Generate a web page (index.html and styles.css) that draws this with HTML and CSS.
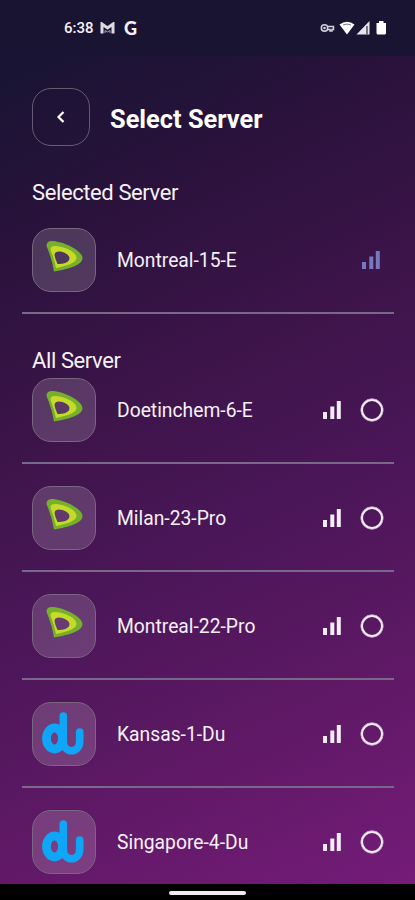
FILE: index.html
```html
<!DOCTYPE html>
<html lang="en">

<head>
    <meta charset="UTF-8">
    <meta name="viewport" content="width=device-width, initial-scale=1.0">
    <title>Select Server</title>
    <link rel="stylesheet" href="styles.css">
</head>

<body>
    <!-- shared icons -->
    <svg class="defs" width="0" height="0">
        <symbol id="etisalat" viewBox="0 0 64 64">
            <path fill-rule="evenodd" d="M14.500 18 Q14.500 12.500 21 13 C33 14 50.500 23 50.500 30 C50.500 37 37 41 22 43.500 Q20 31 14.500 18Z M22 27 V30 L26 37 C31 36 38 35 38 30 C38 24 23 19 22 27Z" fill="#76b02c"/>
            <path fill-rule="evenodd" d="M18.500 22 Q18 17.500 24 18 C34 19 44.500 24 44.500 30 C44.500 35 34 38 24 40 Q22.500 31 18.500 22Z M22.500 27 Q23 31 25.500 36 C31 36 37.500 35 37.500 30 C37.500 25 23 20 22.500 27Z" fill="#c5db28"/>
        </symbol>
        <symbol id="du" viewBox="0 0 64 64">
            <g fill="none" stroke="#0fa6f7" stroke-linecap="round" stroke-linejoin="round">
                <ellipse cx="22.500" cy="36.500" rx="8" ry="10.500" stroke-width="8.800"/>
                <path d="M31.300 14 V39 C31.300 52 47.700 52 47.700 39 V30" stroke-width="7.600"/>
            </g>
        </symbol>
        <symbol id="signal" viewBox="0 0 18 19">
            <path d="M2 12 V19 M9.300 6.500 V19 M15.800 1 V19" fill="none" stroke="currentColor" stroke-width="4"/>
        </symbol>
    </svg>

    <div class="phone">
        <div class="status">
            <span class="time">6:38</span>
            <svg class="mail" width="15" height="12" viewBox="0 0 15 12">
                <path d="M2 11.500 V2 L7.500 6 L13 2 V11.500" fill="none" stroke="#dcd9e2" stroke-width="3"/>
                <path d="M5 11 V8.500 L7.500 10 L10 8.500 V11" fill="none" stroke="#a5a1b2" stroke-width="1"/>
            </svg>
            <span class="google">G</span>
            <svg class="system" width="68" height="16" viewBox="0 0 68 16">
                <g fill="none" stroke="#d5d2dd" stroke-width="1.500">
                    <circle cx="5.500" cy="8" r="3.200"/>
                    <path d="M8 6.500 H14.500 V9.500 H13 V11 H11 V9.500 H8"/>
                    <circle cx="5.500" cy="8" r=".6"/>
                </g>
                <path d="M20.500 4.500 Q28 -1 35.500 4.500 L28 14.500Z" fill="#fff"/>
                <path d="M24 5 Q28 3 32 5" fill="none" stroke="#777383" stroke-width="1"/>
                <path d="M37.500 14.500 L50.500 1 V14.500Z" fill="#e8e6ed"/>
                <path d="M48 6 V14.500" stroke="#554f63" stroke-width="1.500"/>
                <path d="M57.500 3 H60 V1 H64.500 V3 H67 V13 Q67 14.500 65.500 14.500 H59 Q57.500 14.500 57.500 13Z" fill="#fff"/>
            </svg>
        </div>

        <div class="content">
            <div class="header">
                <div class="back">
                    <svg width="10" height="14" viewBox="0 0 10 14">
                        <path d="M7.500 2 L2.500 7 L7.500 12" fill="none" stroke="#fff" stroke-width="2.200"/>
                    </svg>
                </div>
                <h1>Select Server</h1>
            </div>

            <h2>Selected Server</h2>
            <div class="row selected">
                <div class="logo"><svg><use href="#etisalat"/></svg></div>
                <span class="name">Montreal-15-E</span>
                <svg class="signal"><use href="#signal"/></svg>
            </div>

            <h2 class="all">All Server</h2>
            <div class="row">
                <div class="logo"><svg><use href="#etisalat"/></svg></div>
                <span class="name">Doetinchem-6-E</span>
                <svg class="signal"><use href="#signal"/></svg>
                <span class="radio"></span>
            </div>
            <div class="row">
                <div class="logo"><svg><use href="#etisalat"/></svg></div>
                <span class="name">Milan-23-Pro</span>
                <svg class="signal"><use href="#signal"/></svg>
                <span class="radio"></span>
            </div>
            <div class="row">
                <div class="logo"><svg><use href="#etisalat"/></svg></div>
                <span class="name">Montreal-22-Pro</span>
                <svg class="signal"><use href="#signal"/></svg>
                <span class="radio"></span>
            </div>
            <div class="row">
                <div class="logo"><svg><use href="#du"/></svg></div>
                <span class="name">Kansas-1-Du</span>
                <svg class="signal"><use href="#signal"/></svg>
                <span class="radio"></span>
            </div>
            <div class="row">
                <div class="logo"><svg><use href="#du"/></svg></div>
                <span class="name">Singapore-4-Du</span>
                <svg class="signal"><use href="#signal"/></svg>
                <span class="radio"></span>
            </div>
        </div>

        <div class="navbar"><div class="pill"></div></div>
    </div>
</body>

</html>
```

FILE: styles.css
```css
* {
    box-sizing: border-box;
}

body {
    margin: 0;
    font-family: Roboto, "Liberation Sans", sans-serif;
    color: #f5f1f7;
}

.defs {
    display: block;
}

.phone {
    display: flex;
    flex-direction: column;
    width: 415px;
    height: 900px;
    overflow: hidden;
    background: linear-gradient(155deg, #1a1434 8%, #2b123c 24%, #3d144a 42%, #4c1659 60%, #611967 80%, #761c7a 100%);
}

.status {
    display: flex;
    flex: none;
    align-items: center;
    height: 56px;
    padding: 0 28px 0 64px;
    background: #1a1433;
}

.time {
    width: 36px;
    font-size: 15px;
    font-weight: 500;
}

.google {
    margin-left: 9px;
    font-family: Lato, sans-serif;
    font-size: 18px;
    font-weight: 900;
}

.system {
    margin-left: auto;
}

.content {
    flex: 1;
    min-height: 0;
    padding: 32px 21px 0 22px;
    overflow: hidden;
}

.header {
    display: flex;
    align-items: center;
    height: 58px;
    padding-left: 10px;
}

.back {
    display: flex;
    align-items: center;
    justify-content: center;
    width: 58px;
    height: 58px;
    border: 1px solid #685b70;
    border-radius: 19px;
}

h1 {
    margin: 3px 0 0 20px;
    font-size: 25.4px;
    font-weight: 700;
    line-height: 30px;
    color: #fff;
}

h2 {
    height: 27px;
    margin: 33px 0 0 10px;
    font-size: 22px;
    font-weight: 400;
    line-height: 28px;
    letter-spacing: -.4px;
}

.all {
    margin-top: 33px;
}

.row {
    display: flex;
    align-items: flex-start;
    height: 108px;
    padding: 22px 11px 0 10px;
    border-bottom: 2px solid #78698a;
}

.all + .row {
    height: 90px;
    padding-top: 4px;
}

.selected {
    height: 108px;
}

.logo {
    width: 64px;
    height: 64px;
    border: 1px solid #786780;
    border-radius: 19px;
    background: rgba(255, 255, 255, .16);
}

.logo svg {
    display: block;
    width: 64px;
    height: 64px;
    margin: -1px;
}

.name {
    flex: 1;
    margin-left: 21px;
    font-size: 19.3px;
    line-height: 66px;
}

.signal {
    width: 18px;
    height: 19px;
    margin-top: 22px;
    color: #f4edf7;
}

.selected .signal {
    color: #7778bd;
    margin-right: 3px;
}

.radio {
    width: 22px;
    height: 22px;
    margin: 21px 0 0 20px;
    border: 2.5px solid #f4edf7;
    border-radius: 50%;
    box-shadow: 0 0 0 .4px #f4edf7;
}

.navbar {
    display: flex;
    flex: none;
    justify-content: center;
    height: 16px;
    padding-top: 7px;
    background: #000;
}

.pill {
    width: 77px;
    height: 4px;
    border-radius: 2px;
    background: #eee;
}
```
